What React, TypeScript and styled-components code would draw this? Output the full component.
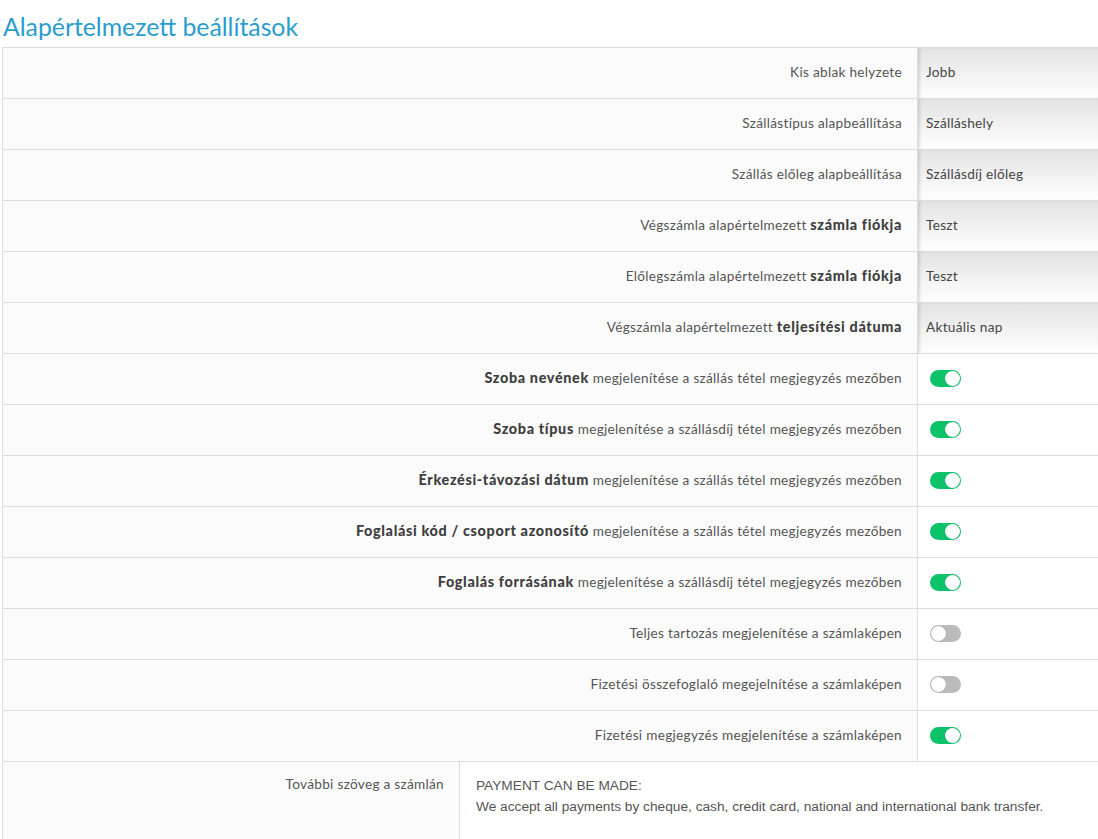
import * as React from 'react';
import styled, { createGlobalStyle } from 'styled-components';

const GlobalStyle = createGlobalStyle`
  html, body {
    margin: 0;
    padding: 0;
    background: #fff;
    overflow: hidden;
  }
  body {
    font-family: Lato, "Open Sans", Arial, sans-serif;
    color: #555;
  }
`;

type SelectRow = { kind: 'select'; label: React.ReactNode; value: string };
type ToggleRow = { kind: 'toggle'; label: React.ReactNode; on: boolean };
type Row = SelectRow | ToggleRow;

const rows: Row[] = [
  { kind: 'select', label: 'Kis ablak helyzete', value: 'Jobb' },
  { kind: 'select', label: 'Szállástípus alapbeállítása', value: 'Szálláshely' },
  { kind: 'select', label: 'Szállás előleg alapbeállítása', value: 'Szállásdíj előleg' },
  {
    kind: 'select',
    label: <>Végszámla alapértelmezett <b>számla fiókja</b></>,
    value: 'Teszt',
  },
  {
    kind: 'select',
    label: <>Előlegszámla alapértelmezett <b>számla fiókja</b></>,
    value: 'Teszt',
  },
  {
    kind: 'select',
    label: <>Végszámla alapértelmezett <b>teljesítési dátuma</b></>,
    value: 'Aktuális nap',
  },
  {
    kind: 'toggle',
    label: <><b>Szoba nevének</b> megjelenítése a szállás tétel megjegyzés mezőben</>,
    on: true,
  },
  {
    kind: 'toggle',
    label: <><b>Szoba típus</b> megjelenítése a szállásdíj tétel megjegyzés mezőben</>,
    on: true,
  },
  {
    kind: 'toggle',
    label: <><b>Érkezési-távozási dátum</b> megjelenítése a szállás tétel megjegyzés mezőben</>,
    on: true,
  },
  {
    kind: 'toggle',
    label: <><b>Foglalási kód / csoport azonosító</b> megjelenítése a szállás tétel megjegyzés mezőben</>,
    on: true,
  },
  {
    kind: 'toggle',
    label: <><b>Foglalás forrásának</b> megjelenítése a szállásdíj tétel megjegyzés mezőben</>,
    on: true,
  },
  { kind: 'toggle', label: 'Teljes tartozás megjelenítése a számlaképen', on: false },
  { kind: 'toggle', label: 'Fizetési összefoglaló megejelnítése a számlaképen', on: false },
  { kind: 'toggle', label: 'Fizetési megjegyzés megjelenítése a számlaképen', on: true },
];

export default function App() {
  return (
    <Page>
      <GlobalStyle />
      <Title>Alapértelmezett beállítások</Title>
      <Table>
        {rows.map((row, i) => (
          <RowGrid key={i}>
            <Label><span>{row.label}</span></Label>
            {row.kind === 'select' ? (
              <SelectCell>{row.value}</SelectCell>
            ) : (
              <ToggleCell>
                <Switch $on={row.on}>
                  <Knob $on={row.on} />
                </Switch>
              </ToggleCell>
            )}
          </RowGrid>
        ))}
        <TextRow>
          <TopLabel><span>További szöveg a számlán</span></TopLabel>
          <TextArea>
            PAYMENT CAN BE MADE:
            <br />
            We accept all payments by cheque, cash, credit card, national and international bank transfer.
          </TextArea>
        </TextRow>
      </Table>
    </Page>
  );
}

const Page = styled.div`
  padding: 12px 0 0 2px;
`;

const Title = styled.h2`
  margin: 0 0 6px 1px;
  font-family: Lato, "Open Sans", sans-serif;
  font-weight: 400;
  font-size: 24.8px;
  line-height: 29px;
  color: #2a9dcf;
`;

const Table = styled.div`
  width: 1097px;
  border-left: 1px solid #ddd;
  border-top: 1px solid #ddd;
  background: #fbfbfb;
`;

const RowGrid = styled.div`
  display: grid;
  grid-template-columns: 1fr 182px;
  height: 50px;
  border-bottom: 1px solid #ddd;
`;

const Label = styled.div`
  display: flex;
  align-items: center;
  justify-content: flex-end;
  padding: 0 15px 3px 0;
  border-right: 1px solid #ddd;
  font-size: 13.6px;
  letter-spacing: 0.3px;
  color: #555;
  white-space: nowrap;

  b {
    font-weight: 900;
    font-size: 14.4px;
    color: #3f3f3f;
    letter-spacing: 0.65px;
  }
`;

const SelectCell = styled.div`
  display: flex;
  align-items: center;
  padding: 0 0 2px 8px;
  font-size: 13.6px;
  letter-spacing: 0.3px;
  color: #444;
  background: linear-gradient(#e3e3e3, #ffffff);
  box-shadow: inset 3px 0 3px -1px rgba(0, 0, 0, 0.12);
`;

const ToggleCell = styled.div`
  display: flex;
  align-items: center;
  padding: 0 0 1px 12px;
  background: #fff;
`;

const Switch = styled.div<{ $on: boolean }>`
  position: relative;
  width: 31px;
  height: 17px;
  border-radius: 9px;
  background: ${p => (p.$on ? '#0cc36a' : '#bbbbbb')};
`;

const Knob = styled.div<{ $on: boolean }>`
  position: absolute;
  top: 1px;
  left: ${p => (p.$on ? '15px' : '1px')};
  width: 15px;
  height: 15px;
  border-radius: 50%;
  background: #fff;
  box-shadow: 0 0 1px rgba(0, 0, 0, 0.3);
`;

const TextRow = styled.div`
  display: grid;
  grid-template-columns: 457px 1fr;
  height: 90px;
`;

const TopLabel = styled(Label)`
  align-items: flex-start;
  padding-top: 14px;
`;

const TextArea = styled.div`
  background: #fff;
  padding: 13px 16px 0 16px;
  font-family: "Liberation Sans", Arial, sans-serif;
  font-size: 13.7px;
  line-height: 21px;
  color: #555;
`;
